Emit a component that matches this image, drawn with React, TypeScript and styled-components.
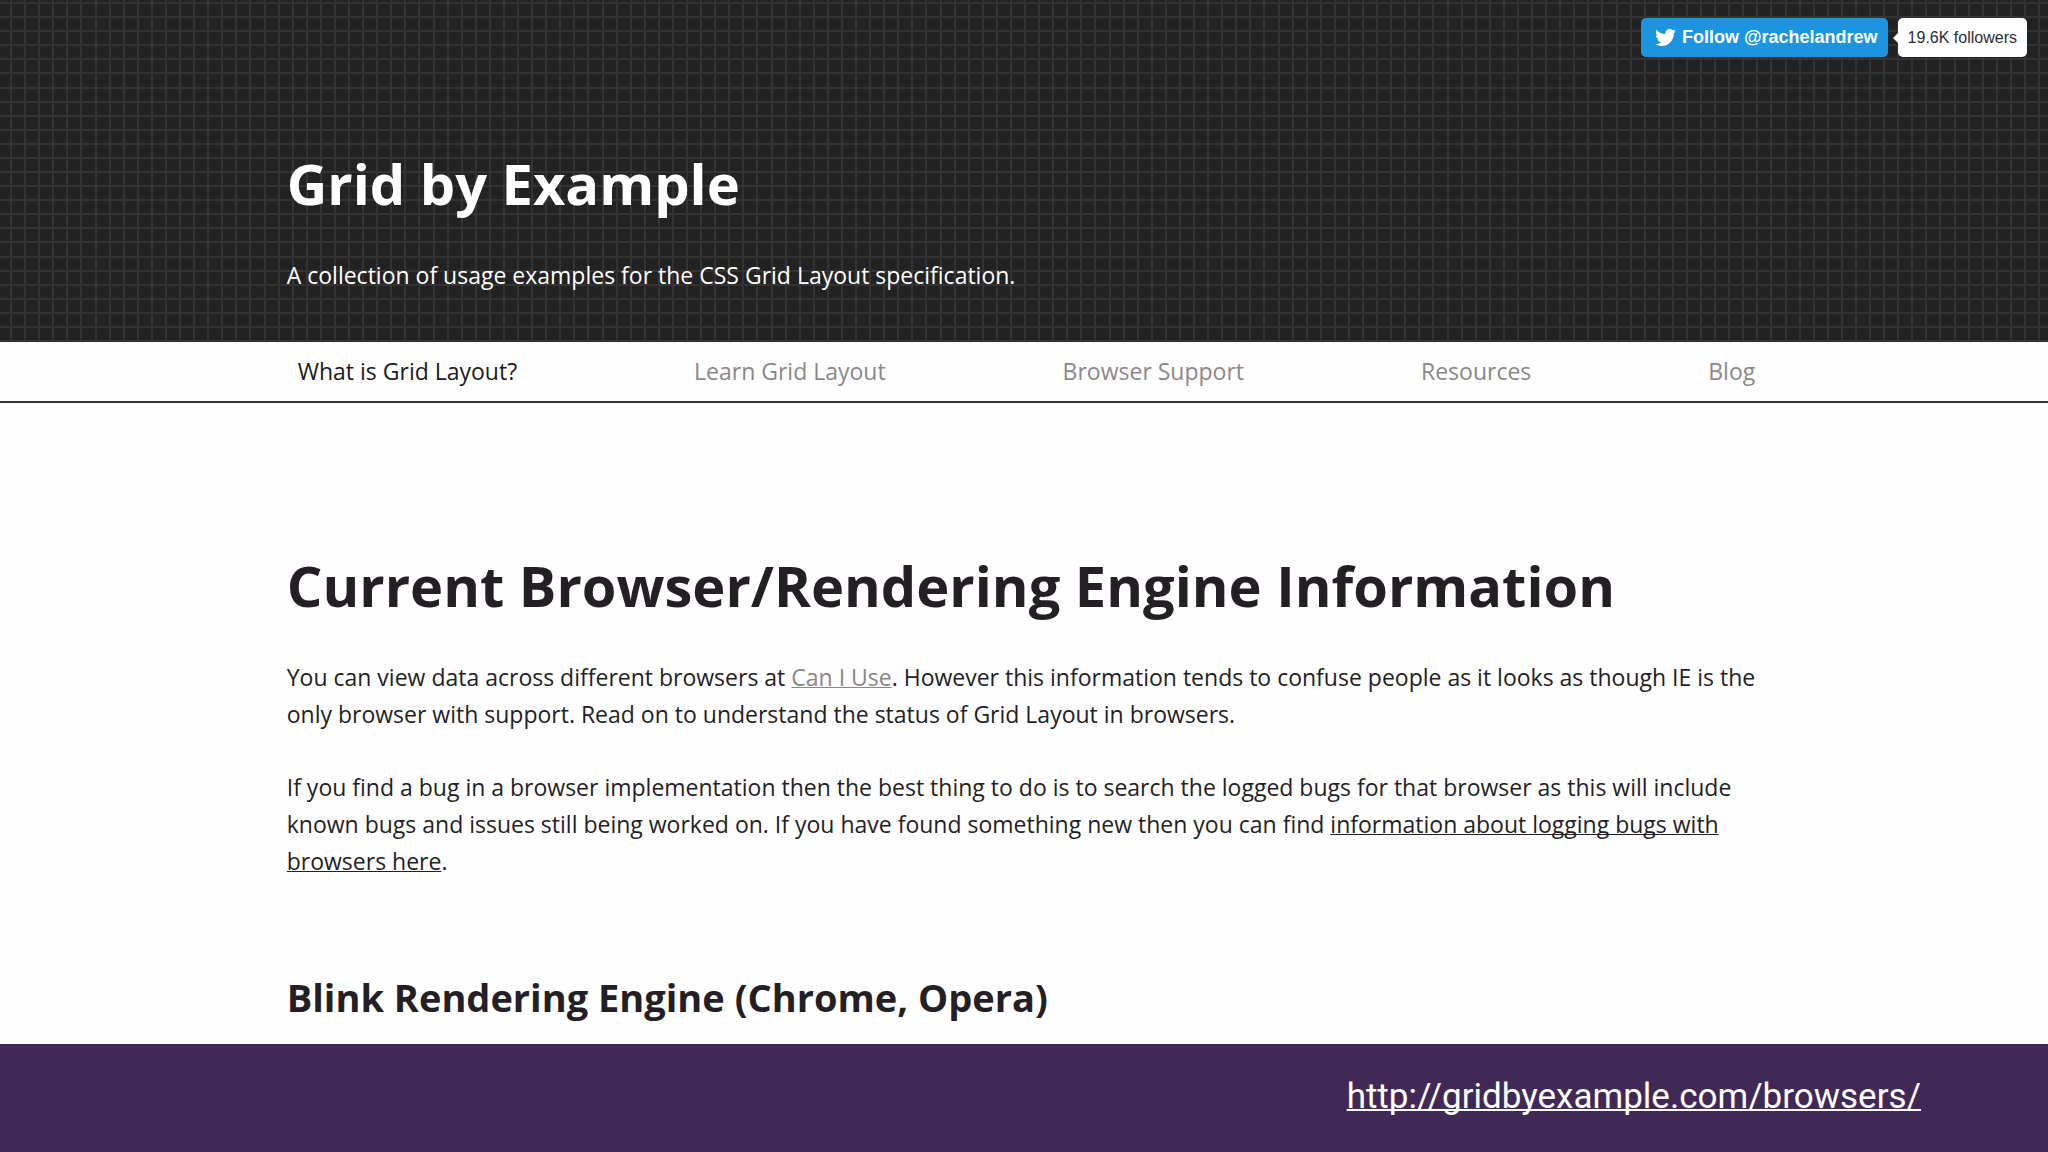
import React from "react";
import styled, { createGlobalStyle, css } from "styled-components";
import { FaTwitter } from "react-icons/fa";

const GRAPH_TILE = 169;
const GRAPH_LINES = 12;

// One tile of graph paper: evenly spread hairlines snapped to whole pixels.
const graphLines = (direction: string, offset: number) => {
  const stops: string[] = ["transparent 0"];
  for (let i = 0; i < GRAPH_LINES; i += 1) {
    const at = offset + Math.round((i * GRAPH_TILE) / GRAPH_LINES);
    stops.push(
      `transparent ${at}px`,
      `#333 ${at}px`,
      `#333 ${at + 2}px`,
      `transparent ${at + 2}px`
    );
  }
  return `linear-gradient(${direction}, ${stops.join(", ")})`;
};

const GlobalStyle = createGlobalStyle`
  *, *::before, *::after { box-sizing: border-box; }
  body {
    margin: 0;
    background: #fefefe;
    color: #231f24;
    font-family: "Open Sans", "Noto Sans", sans-serif;
    font-size: 23px;
    line-height: 37px;
  }
`;

const Page = styled.div`
  min-height: 100vh;
  display: flex;
  flex-direction: column;
`;

const gutter = css`
  padding-left: 14%;
  padding-right: 14%;
`;

const Masthead = styled.header`
  display: flex;
  flex-direction: column;
  padding-top: 18px;
  padding-bottom: 48px;
  color: #fff;
  background-color: #222;
  background-image: ${graphLines("to right", 10)}, ${graphLines("to bottom", 2)};
  background-size: ${GRAPH_TILE}px ${GRAPH_TILE}px;
`;

const Follow = styled.div`
  display: flex;
  align-self: flex-end;
  gap: 10px;
  margin-right: 21px;
  font-family: "Liberation Sans", Arial, sans-serif;
  font-size: 18px;
  line-height: 39px;
`;

const FollowLink = styled.a`
  display: flex;
  align-items: center;
  gap: 6px;
  padding: 0 10px 0 14px;
  border-radius: 5px;
  background: #1b95e0;
  color: #fff;
  font-weight: 700;
  text-decoration: none;
`;

const FollowerCount = styled.a`
  position: relative;
  padding: 0 10px;
  border-radius: 5px;
  background: #fff;
  color: #292f33;
  font-size: 16px;
  text-decoration: none;

  &::before {
    content: "";
    position: absolute;
    top: 14px;
    left: -5px;
    border: solid transparent;
    border-width: 6px 6px 6px 0;
    border-right-color: #fff;
  }
`;

const Banner = styled.div`
  ${gutter}
  padding-top: 86px;
`;

const Title = styled.h1`
  margin: 0 0 34px;
  font-size: 56px;
  line-height: 80px;
  font-weight: 700;
`;

const Tagline = styled.p`
  margin: 0;
`;

const NavBar = styled.nav`
  ${gutter}
  border-bottom: 2px solid #333;
`;

const NavList = styled.ul`
  display: flex;
  justify-content: space-between;
  list-style: none;
  margin: 0;
  padding: 11px 6px 11px 11px;
`;

const NavLink = styled.a<{ $current?: boolean }>`
  color: ${(p) => (p.$current ? "#1d1a20" : "#8b8889")};
  text-decoration: none;
`;

const Content = styled.main`
  ${gutter}
  flex: 1;
  padding-top: 142px;
`;

const Paragraph = styled.p`
  margin: 0 0 36px;
`;

const SectionTitle = styled.h2`
  margin: 89px 0 0;
  font-size: 38px;
  line-height: 56px;
  font-weight: 700;
`;

const TextLink = styled.a<{ $muted?: boolean }>`
  color: ${(p) => (p.$muted ? "#8b8589" : "inherit")};
  text-decoration-line: underline;
  text-decoration-thickness: 1px;
  text-decoration-skip-ink: none;
`;

const Footer = styled.footer`
  display: flex;
  justify-content: flex-end;
  padding: 31px 127px 33px;
  background: #412957;
`;

const SourceLink = styled.a`
  color: #fff;
  font-family: Roboto, "Liberation Sans", sans-serif;
  font-size: 35px;
  line-height: 44px;
  text-decoration-thickness: 2px;
  text-decoration-skip-ink: none;
`;

const navItems = [
  "What is Grid Layout?",
  "Learn Grid Layout",
  "Browser Support",
  "Resources",
  "Blog",
];

export default function App() {
  return (
    <Page>
      <GlobalStyle />
      <Masthead>
        <Follow>
          <FollowLink href="#follow">
            <FaTwitter size={21} aria-hidden="true" />
            Follow @rachelandrew
          </FollowLink>
          <FollowerCount href="#followers">19.6K followers</FollowerCount>
        </Follow>
        <Banner>
          <Title as="p">Grid by Example</Title>
          <Tagline>
            A collection of usage examples for the CSS Grid Layout specification.
          </Tagline>
        </Banner>
      </Masthead>
      <NavBar>
        <NavList>
          {navItems.map((label, i) => (
            <li key={label}>
              <NavLink href="#" $current={i === 0}>
                {label}
              </NavLink>
            </li>
          ))}
        </NavList>
      </NavBar>
      <Content>
        <Title>Current Browser/Rendering Engine Information</Title>
        <Paragraph>
          You can view data across different browsers at{" "}
          <TextLink href="#can-i-use" $muted>
            Can I Use
          </TextLink>
          . However this information tends to confuse people as it looks as though IE is the
          only browser with support. Read on to understand the status of Grid Layout in
          browsers.
        </Paragraph>
        <Paragraph>
          If you find a bug in a browser implementation then the best thing to do is to search
          the logged bugs for that browser as this will include known bugs and issues still
          being worked on. If you have found something new then you can find{" "}
          <TextLink href="#logging-bugs">information about logging bugs with browsers here</TextLink>.
        </Paragraph>
        <SectionTitle>Blink Rendering Engine (Chrome, Opera)</SectionTitle>
      </Content>
      <Footer>
        <SourceLink href="#browsers">http://gridbyexample.com/browsers/</SourceLink>
      </Footer>
    </Page>
  );
}
